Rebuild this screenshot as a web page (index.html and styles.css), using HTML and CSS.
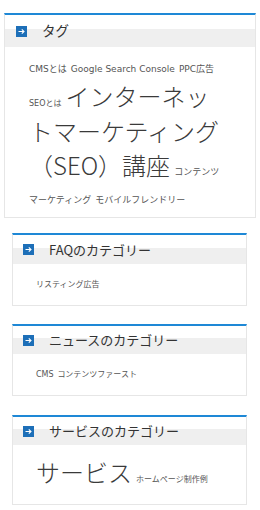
FILE: index.html
```html
<!DOCTYPE html>
<html lang="ja">
<head>
<meta charset="utf-8">
<link rel="stylesheet" href="styles.css">
</head>
<body>
<div class="page">
  <section class="card card-wide">
    <h2 class="card-head head-tall"><span class="ico"><svg viewBox="0 0 11 11" width="11" height="11"><path d="M2.5 5.5h5.5M5.8 3.3l2.2 2.2-2.2 2.2" fill="none" stroke="#fff" stroke-width="1.1"/></svg></span><span class="title">タグ</span></h2>
    <div class="cloud tags"><span class="t9">CMSとは</span> <span class="t9">Google Search Console</span> <span class="t9">PPC広告</span> <span class="t8 nw">SEOとは</span> <span class="t24">インターネットマーケティング（SEO）講座</span> <span class="t9">コンテンツマーケティング</span> <span class="t9 lift">モバイルフレンドリー</span></div>
  </section>
  <section class="card card-2">
    <h2 class="card-head"><span class="ico"><svg viewBox="0 0 11 11" width="11" height="11"><path d="M2.5 5.5h5.5M5.8 3.3l2.2 2.2-2.2 2.2" fill="none" stroke="#fff" stroke-width="1.1"/></svg></span><span class="title">FAQのカテゴリー</span></h2>
    <div class="cloud"><span class="t8">リスティング広告</span></div>
  </section>
  <section class="card card-3">
    <h2 class="card-head head-short"><span class="ico"><svg viewBox="0 0 11 11" width="11" height="11"><path d="M2.5 5.5h5.5M5.8 3.3l2.2 2.2-2.2 2.2" fill="none" stroke="#fff" stroke-width="1.1"/></svg></span><span class="title">ニュースのカテゴリー</span></h2>
    <div class="cloud"><span class="t8">CMS</span> <span class="t8">コンテンツファースト</span></div>
  </section>
  <section class="card card-4">
    <h2 class="card-head head-short"><span class="ico"><svg viewBox="0 0 11 11" width="11" height="11"><path d="M2.5 5.5h5.5M5.8 3.3l2.2 2.2-2.2 2.2" fill="none" stroke="#fff" stroke-width="1.1"/></svg></span><span class="title">サービスのカテゴリー</span></h2>
    <div class="cloud cloud-big"><span class="t24">サービス</span> <span class="t8">ホームページ制作例</span></div>
  </section>
</div>
</body>
</html>
```
FILE: styles.css
```css
html, body {
  margin: 0;
  padding: 0;
  background: #fff;
}
body {
  font-family: "Noto Sans CJK JP", "Noto Sans", sans-serif;
  color: #333;
}
.page {
  display: flex;
  flex-direction: column;
  padding: 13px 0 4px;
}
.card {
  margin: 0 13px 0 12px;
  border: 1px solid #e6e6e6;
  border-top: 2px solid #1e88d6;
  background: #fff;
}
.card-wide {
  margin: 0 4px;
}
.card-2 { margin-top: 15px; }
.card-3 { margin-top: 18px; }
.card-4 { margin-top: 19px; }
.card-head {
  margin: 0;
  display: flex;
  align-items: center;
  height: 29px;
  padding: 0 0 0 10px;
  font-weight: normal;
  font-size: 13px;
  line-height: 1;
  background: linear-gradient(to bottom, #fff 0, #fff 13px, #efefef 13px, #efefef 100%);
}
.head-short {
  height: 28px;
  background: linear-gradient(to bottom, #fff 0, #fff 12px, #efefef 12px, #efefef 100%);
}
.head-tall {
  height: 32px;
  padding-left: 11px;
  font-size: 13.5px;
  background: linear-gradient(to bottom, #fff 0, #fff 14px, #efefef 14px, #efefef 100%);
}
.ico {
  width: 11px;
  height: 11px;
  flex: none;
  background: #1d6fb8;
  display: flex;
}
.title {
  margin-left: 15px;
  margin-top: -1px;
  color: #333;
}
.cloud {
  padding: 13px 20px 13px 23px;
  font-size: 8px;
  line-height: 14px;
  color: #555;
}
.tags {
  padding: 12px 30px 7px 24px;
  font-size: 9px;
  line-height: 20px;
}
.cloud-big {
  padding: 10px 20px 14px 23px;
  font-size: 9px;
  line-height: 20px;
}
.t8, .t9 {
  font-family: "DejaVu Sans", "Noto Sans CJK JP", sans-serif;
  margin-right: 2px;
}
.t8 { font-size: 8px; }
.t9 { font-size: 9px; }
.nw { white-space: nowrap; }
.lift {
  display: inline-block;
  padding-top: 8px;
}
.t24 {
  font-family: "Noto Sans CJK JP", sans-serif;
  font-size: 24px;
  font-weight: 300;
  line-height: 34px;
  color: #3a3a3a;
  margin-right: 2px;
}
```
